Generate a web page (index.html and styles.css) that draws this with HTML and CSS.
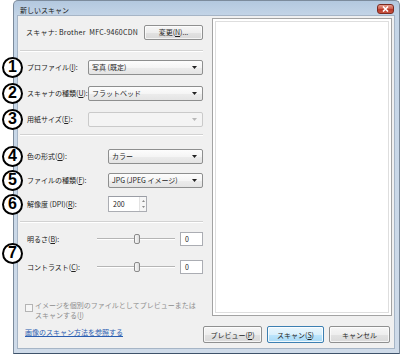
FILE: index.html
```html
<!DOCTYPE html>
<html lang="ja">
<head>
<meta charset="utf-8">
<title>新しいスキャン</title>
<link rel="stylesheet" href="styles.css">
</head>
<body>
<div class="page">
  <div class="window">
    <div class="titlebar">
      <span class="title">新しいスキャン</span>
      <span class="close"><svg width="7" height="6" viewBox="0 0 7 6"><path d="M1 0.5L6 5.5M6 0.5L1 5.5" stroke="#fff" stroke-width="1.6"/></svg></span>
    </div>
    <div class="client">
      <div class="main">
        <div class="left">
          <div class="scanner-row">
            <span class="scanner-name">スキャナ: Brother&nbsp; MFC-9460CDN</span>
            <span class="btn btn-change">変更(<u>N</u>)...</span>
          </div>
          <div class="sep sep1"></div>
          <div class="group g1">
            <div class="row">
              <span class="badge">1</span>
              <span class="label lw1">プロファイル(<u>I</u>):</span>
              <span class="combo cw1"><span class="combo-text">写真 (既定)</span><svg class="arrow" width="5" height="3" viewBox="0 0 5 3"><path d="M0 0h5L2.5 3z" fill="#222"/></svg></span>
            </div>
            <div class="row">
              <span class="badge">2</span>
              <span class="label lw1">スキャナの種類(<u>U</u>):</span>
              <span class="combo cw1"><span class="combo-text">フラットベッド</span><svg class="arrow" width="5" height="3" viewBox="0 0 5 3"><path d="M0 0h5L2.5 3z" fill="#222"/></svg></span>
            </div>
            <div class="row">
              <span class="badge">3</span>
              <span class="label lw1">用紙サイズ(<u>E</u>):</span>
              <span class="combo cw1 disabled"><span class="combo-text"></span><svg class="arrow" width="5" height="3" viewBox="0 0 5 3"><path d="M0 0h5L2.5 3z" fill="#b8b8b8"/></svg></span>
            </div>
          </div>
          <div class="sep sep2"></div>
          <div class="group g2">
            <div class="row">
              <span class="badge">4</span>
              <span class="label lw2">色の形式(<u>O</u>):</span>
              <span class="combo cw2"><span class="combo-text">カラー</span><svg class="arrow" width="5" height="3" viewBox="0 0 5 3"><path d="M0 0h5L2.5 3z" fill="#222"/></svg></span>
            </div>
            <div class="row">
              <span class="badge">5</span>
              <span class="label lw2">ファイルの種類(<u>F</u>):</span>
              <span class="combo cw2"><span class="combo-text">JPG (JPEG イメージ)</span><svg class="arrow" width="5" height="3" viewBox="0 0 5 3"><path d="M0 0h5L2.5 3z" fill="#222"/></svg></span>
            </div>
            <div class="row">
              <span class="badge">6</span>
              <span class="label lw2">解像度 (DPI)(<u>R</u>):</span>
              <span class="spin">
                <span class="spin-text">200</span>
                <span class="spin-btns">
                  <svg width="3" height="2" viewBox="0 0 3 2"><path d="M0 2h3L1.5 0z" fill="#8a8a8a"/></svg>
                  <svg width="3" height="2" viewBox="0 0 3 2"><path d="M0 0h3L1.5 2z" fill="#8a8a8a"/></svg>
                </span>
              </span>
            </div>
          </div>
          <div class="sep sep3"></div>
          <div class="group g3">
            <span class="badge badge7">7</span>
            <div class="row">
              <span class="label lw3">明るさ(<u>B</u>):</span>
              <span class="slider"><span class="track"></span><span class="thumb"></span></span>
              <span class="numbox">0</span>
            </div>
            <div class="row">
              <span class="label lw3">コントラスト(<u>C</u>):</span>
              <span class="slider"><span class="track"></span><span class="thumb"></span></span>
              <span class="numbox">0</span>
            </div>
          </div>
          <div class="check">
            <span class="checkbox"></span>
            <span class="check-text">イメージを個別のファイルとしてプレビューまたは<br>スキャンする(<u>I</u>)</span>
          </div>
        </div>
        <div class="preview"></div>
      </div>
      <div class="footer">
        <a class="link">画像のスキャン方法を参照する</a>
        <div class="buttons">
          <span class="btn bw-preview">プレビュー(<u>P</u>)</span>
          <span class="btn btn-default bw-scan">スキャン(<u>S</u>)</span>
          <span class="btn bw-cancel">キャンセル</span>
        </div>
      </div>
    </div>
  </div>
</div>
</body>
</html>
```

FILE: styles.css
```css
* { box-sizing: border-box; }
html, body { margin: 0; padding: 0; background: #ffffff; }
body {
  font-family: "Noto Sans CJK JP", "Noto Sans", sans-serif;
  font-size: 7px;
  color: #222222;
}
u { text-decoration: underline; text-underline-offset: 1px; }

.page {
  width: 400px;
  height: 357px;
  padding-left: 13px;
}

.window {
  width: 387px;
  height: 354px;
  border: 1px solid #7c8b9c;
  border-bottom-color: #3e526a;
  border-radius: 5px 5px 0 0;
  background: linear-gradient(#b3c8df 0, #c4d5e7 15px, #cfdbe9 100%);
  padding: 0 5px 5px 4px;
  display: flex;
  flex-direction: column;
}

.titlebar {
  height: 15px;
  display: flex;
  justify-content: space-between;
  align-items: flex-start;
  padding-left: 2px;
}
.title {
  line-height: 15px;
  padding-top: 2px;
  color: #1a1a1a;
}
.close {
  width: 17px;
  height: 10px;
  margin-top: 3px;
  border: 1px solid #7a2a20;
  border-radius: 3px;
  background: linear-gradient(#e59d8f 0, #d0614f 45%, #b8392a 55%, #c9523e 100%);
  display: flex;
  align-items: center;
  justify-content: center;
}

.client {
  height: 332px;
  background: #f0f0f0;
  box-shadow: 0 0 0 1px #a6b5c6;
  display: flex;
  flex-direction: column;
}

.main {
  height: 304px;
  display: flex;
}

.left {
  width: 194px;
  padding: 8px 9px 0 7px;
  display: flex;
  flex-direction: column;
}

.scanner-row {
  height: 16px;
  display: flex;
  justify-content: space-between;
  align-items: center;
}
.scanner-name { padding-left: 1px; letter-spacing: 0.25px; }

.btn {
  display: inline-flex;
  align-items: center;
  justify-content: center;
  height: 15px;
  border: 1px solid #8f9090;
  border-radius: 2px;
  background: linear-gradient(#f6f6f6 0, #eeeeee 50%, #e2e2e2 51%, #d9d9d9 100%);
  box-shadow: inset 0 0 0 1px rgba(255,255,255,0.7);
  color: #1e1e1e;
}
.btn-change { width: 59px; }

.sep {
  height: 2px;
  margin-left: -5px;
  border-top: 1px solid #d2d2d2;
  border-bottom: 1px solid #ffffff;
}
.sep1 { margin-top: 10px; }
.sep2 { margin-top: 2px; }
.sep3 { margin-top: 5px; }

.group { position: relative; }
.g1 { margin-top: 2px; }
.g2 { margin-top: 8px; }
.g3 { margin-top: 2px; }

.row {
  position: relative;
  display: flex;
  align-items: center;
}
.g1 .row { height: 26px; }
.g2 .row { height: 24px; }
.g3 .row { height: 28px; }

.badge {
  position: absolute;
  left: -23px;
  top: 50%;
  width: 21px;
  height: 21px;
  margin-top: -10.5px;
  border: 2px solid #000;
  border-radius: 50%;
  background: #fff;
  display: flex;
  align-items: center;
  justify-content: center;
  font-family: "Liberation Sans", Arial, sans-serif;
  font-weight: bold;
  font-size: 16px;
  line-height: 1;
  color: #000;
  z-index: 2;
}

.label { flex: none; padding-left: 2px; }
.lw1 { width: 63px; }
.lw2 { width: 83px; }
.lw3 { width: 72px; }

.combo {
  height: 15px;
  border: 1px solid #8e8f8f;
  border-radius: 2px;
  background: linear-gradient(#fdfdfd 0, #f5f5f5 50%, #ececec 51%, #e4e4e4 100%);
  display: flex;
  align-items: center;
  justify-content: space-between;
  padding: 0 5px 0 3px;
}
.combo.disabled {
  border-color: #cacaca;
  background: #f4f4f4;
}
.cw1 { width: 115px; }
.cw2 { width: 95px; }

.spin {
  width: 39px;
  height: 16px;
  border: 1px solid #abadb3;
  border-top-color: #9a9da5;
  background: #fff;
  display: flex;
  align-items: center;
  justify-content: space-between;
}
.spin-text { padding-left: 4px; }
.spin-btns {
  width: 7px;
  height: 14px;
  display: flex;
  flex-direction: column;
  align-items: center;
  justify-content: space-evenly;
  border-left: 1px solid #e3e3e3;
  background: #f6f6f6;
}
.spin-btns svg { display: block; }

.slider {
  position: relative;
  width: 78px;
  height: 12px;
  margin-right: 5px;
}
.track {
  position: absolute;
  left: 0;
  right: 0;
  top: 5px;
  height: 2px;
  border-top: 1px solid #b5b5b5;
  border-bottom: 1px solid #ffffff;
}
.thumb {
  position: absolute;
  left: 37px;
  top: 1px;
  width: 6px;
  height: 10px;
  border: 1px solid #8a8a8a;
  border-radius: 2px;
  background: linear-gradient(90deg, #f8f8f8, #dcdcdc);
}

.numbox {
  width: 23px;
  height: 14px;
  border: 1px solid #abadb3;
  background: #fff;
  padding-left: 4px;
  line-height: 12px;
}

.check {
  margin-top: 19px;
  display: flex;
  align-items: flex-start;
  color: #8d8d8d;
  line-height: 10px;
}
.checkbox {
  flex: none;
  width: 8px;
  height: 8px;
  margin-top: 4px;
  margin-right: 2px;
  border: 1px solid #b4b4b4;
  background: #f6f6f6;
}

.preview {
  width: 180px;
  height: 298px;
  margin-top: 2px;
  border: 1px solid #a3a3a3;
  background: #fff;
  box-shadow: inset 0 0 0 2px #ffffff, inset 0 0 0 3px #dedede;
}

.footer {
  height: 28px;
  display: flex;
  justify-content: space-between;
  align-items: flex-start;
  padding: 6px 4px 0 7px;
}
.link {
  line-height: 12px;
  color: #2a5db0;
  text-decoration: underline;
}
.buttons {
  display: flex;
  gap: 5px;
}
.buttons .btn { height: 17px; }
.bw-preview { width: 59px; }
.bw-scan { width: 57px; }
.bw-cancel { width: 61px; }
.btn-default {
  border-color: #3c7fb1;
  background: linear-gradient(#eaf6fd 0, #d9f0fc 50%, #bee6fd 51%, #a7d9f5 100%);
  box-shadow: inset 0 0 0 1px rgba(255,255,255,0.8);
}
```
